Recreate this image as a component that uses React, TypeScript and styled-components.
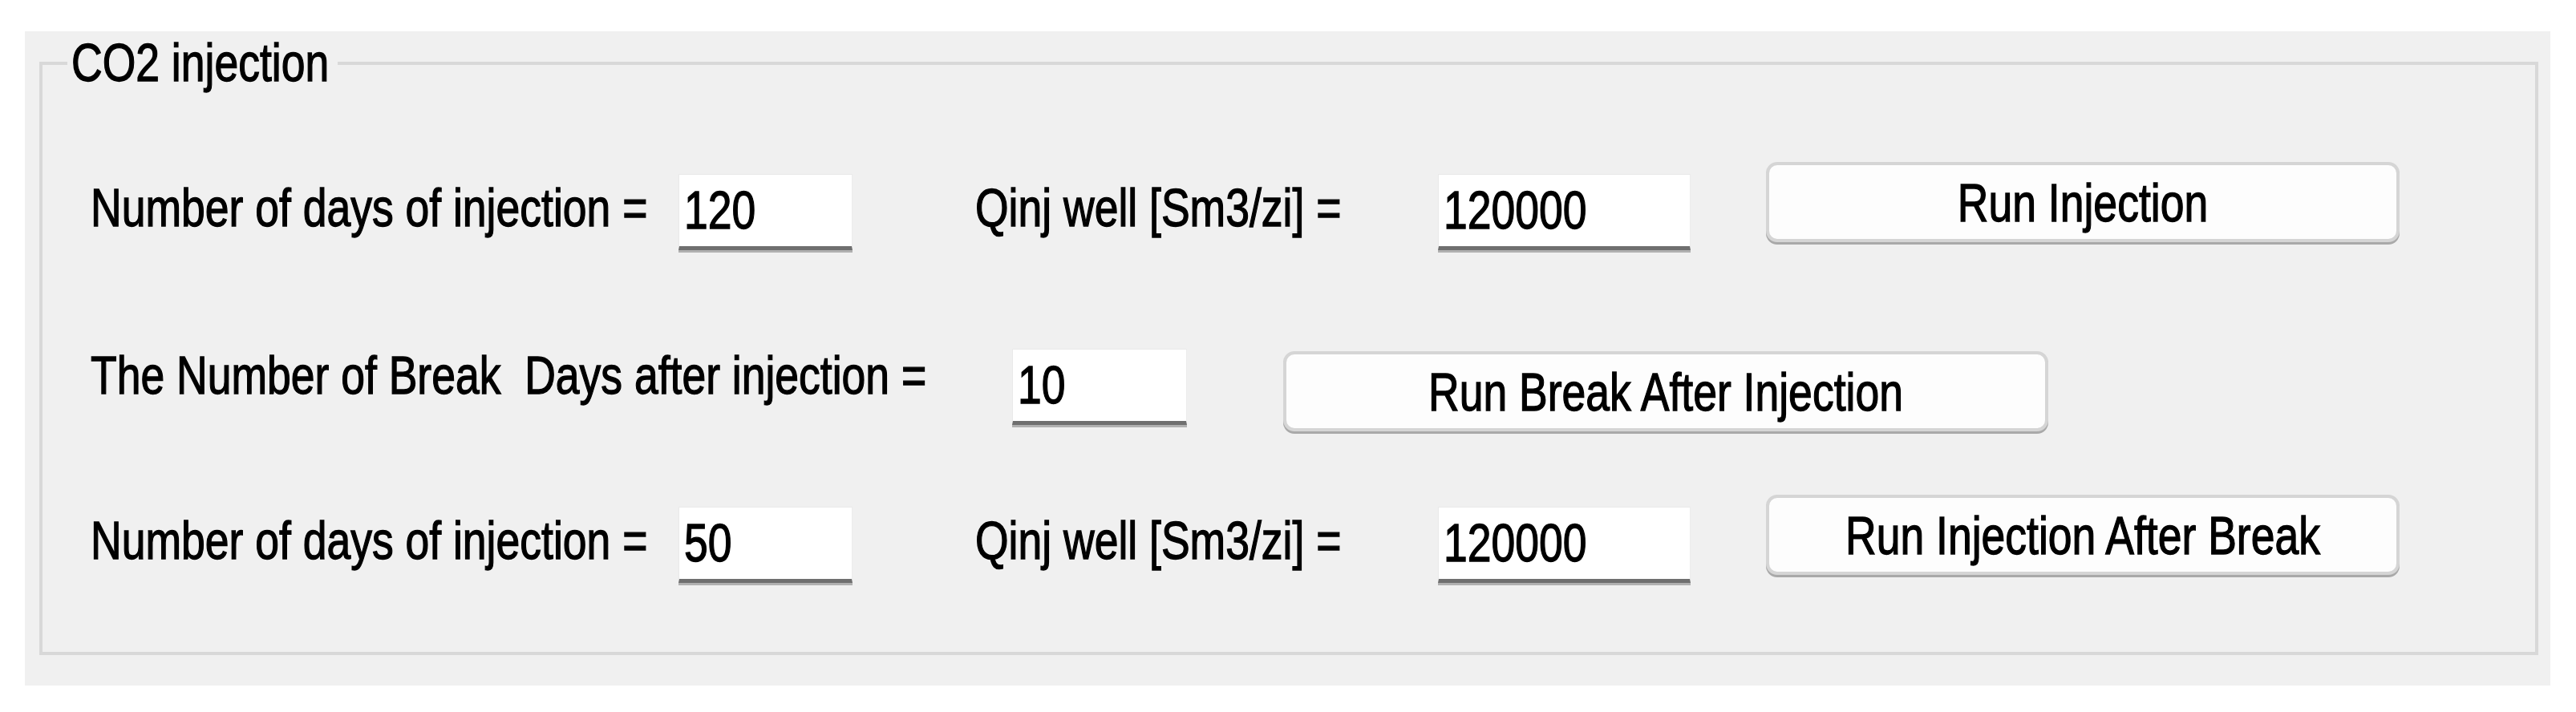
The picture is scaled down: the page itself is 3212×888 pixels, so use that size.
import React from "react";
import styled, { createGlobalStyle } from "styled-components";

const Global = createGlobalStyle`
  html, body {
    margin: 0;
    padding: 0;
    background: #ffffff;
  }
  body {
    font-family: "Liberation Sans", Arial, sans-serif;
    color: #000000;
  }
`;

const Page = styled.div`
  padding: 39px 0 0 31px;
`;

const Panel = styled.div`
  width: 3149px;
  height: 816px;
  box-sizing: border-box;
  background: #f0f0f0;
  padding: 9px 15px 38px 18px;
`;

const Group = styled.fieldset`
  box-sizing: border-box;
  height: 100%;
  margin: 0;
  padding: 0;
  min-width: 0;
  border: 4px solid #d8d8d8;
`;

const Legend = styled.legend`
  margin-left: 31px;
  padding: 0 11px 0 5px;
  font-size: 53.5px;
  line-height: 62px;
  color: #000;
`;

const Stretch = styled.span`
  display: inline-block;
  transform: scaleY(1.23);
  transform-origin: 50% 50%;
  white-space: pre;
  -webkit-text-stroke: 1.1px #000;
`;

const Rows = styled.div`
  display: flex;
  flex-direction: column;
  padding-left: 60px;
`;

const Row = styled.div<{ $mt: number }>`
  display: flex;
  align-items: flex-start;
  margin-top: ${(p) => p.$mt}px;
`;

const Label = styled.div<{ $w: number; $mt: number; $ml?: number }>`
  flex: 0 0 ${(p) => p.$w}px;
  margin-top: ${(p) => p.$mt}px;
  margin-left: ${(p) => p.$ml ?? 0}px;
  font-size: 53.5px;
  line-height: 62px;
  white-space: pre;
  color: #000;
`;

const TextBox = styled.div<{ $w: number; $mt: number }>`
  flex: 0 0 ${(p) => p.$w}px;
  margin-top: ${(p) => p.$mt}px;
  height: 95px;
  box-sizing: border-box;
  display: flex;
  align-items: center;
  padding-left: 6px;
  background: #ffffff;
  border-top: 1px solid #e9e9e9;
  border-left: 1px solid #e9e9e9;
  border-right: 1px solid #ececec;
  border-bottom: 5px solid #6f6f6f;
  box-shadow: 0 3px 0 #b0b0b0;
  font-size: 53.5px;
  line-height: 62px;
  color: #000;
`;

const Button = styled.button<{ $w: number; $mt: number; $ml: number }>`
  flex: 0 0 ${(p) => p.$w}px;
  margin-top: ${(p) => p.$mt}px;
  margin-left: ${(p) => p.$ml}px;
  height: 100px;
  box-sizing: border-box;
  display: flex;
  align-items: center;
  justify-content: center;
  padding: 4px 0 0;
  background: #fdfdfd;
  border: 4px solid #d5d5d5;
  border-radius: 14px;
  box-shadow: 0 3px 0 #a9a9a9;
  font-family: "Liberation Sans", Arial, sans-serif;
  font-size: 53.5px;
  line-height: 62px;
  color: #000;
  cursor: default;
`;

type InjectionRowProps = { mt: number; days: string; q: string; action: string };

function InjectionRow({ mt, days, q, action }: InjectionRowProps) {
  return (
    <Row $mt={mt}>
      <Label $w={733} $mt={27}>
        <Stretch>Number of days of injection =</Stretch>
      </Label>
      <TextBox $w={217} $mt={15}>
        <Stretch>{days}</Stretch>
      </TextBox>
      <Label $w={577} $mt={27} $ml={153}>
        <Stretch>Qinj well [Sm3/zi] =</Stretch>
      </Label>
      <TextBox $w={315} $mt={15}>
        <Stretch>{q}</Stretch>
      </TextBox>
      <Button $w={790} $mt={0} $ml={94}>
        <Stretch>{action}</Stretch>
      </Button>
    </Row>
  );
}

export default function App() {
  return (
    <>
      <Global />
      <Page>
        <Panel>
          <Group>
            <Legend>
              <Stretch>CO2 injection</Stretch>
            </Legend>
            <Rows>
              <InjectionRow mt={92} days="120" q="120000" action="Run Injection" />
              <Row $mt={123}>
                <Label $w={1149} $mt={3}>
                  <Stretch>The Number of Break  Days after injection =</Stretch>
                </Label>
                <TextBox $w={218} $mt={0}>
                  <Stretch>10</Stretch>
                </TextBox>
                <Button $w={954} $mt={3} $ml={120}>
                  <Stretch>Run Break After Injection</Stretch>
                </Button>
              </Row>
              <InjectionRow mt={79} days="50" q="120000" action="Run Injection After Break" />
            </Rows>
          </Group>
        </Panel>
      </Page>
    </>
  );
}
